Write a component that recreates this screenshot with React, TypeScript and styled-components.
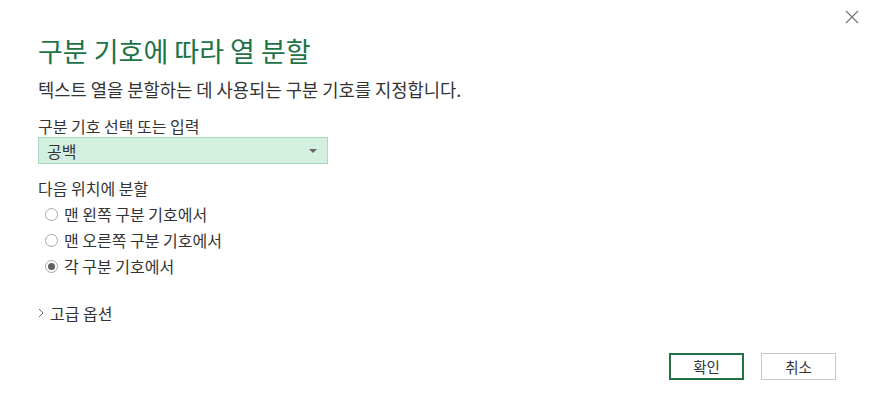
import React from "react";
import styled, { createGlobalStyle } from "styled-components";

const FONT = `"Noto Sans CJK KR", "Noto Sans", sans-serif`;

const GlobalStyle = createGlobalStyle`
  html, body {
    margin: 0;
    padding: 0;
    background: #ffffff;
  }
  body {
    font-family: ${FONT};
    color: #333333;
  }
`;

const OPTIONS = ["맨 왼쪽 구분 기호에서", "맨 오른쪽 구분 기호에서", "각 구분 기호에서"];

export default function App() {
  const [picked, setPicked] = React.useState(2);

  return (
    <>
      <GlobalStyle />
      <Dialog>
        <CloseButton aria-label="닫기">
          <svg width="14" height="14" viewBox="0 0 14 14">
            <path d="M1 1 L13 13 M13 1 L1 13" stroke="#777" strokeWidth="1.2" fill="none" />
          </svg>
        </CloseButton>
        <Title>구분 기호에 따라 열 분할</Title>
        <Subtitle>텍스트 열을 분할하는 데 사용되는 구분 기호를 지정합니다.</Subtitle>

        <FieldLabel>구분 기호 선택 또는 입력</FieldLabel>
        <Select>
          <span>공백</span>
          <Caret />
        </Select>

        <FieldLabel $top={14}>다음 위치에 분할</FieldLabel>
        <RadioList>
          {OPTIONS.map((label, i) => (
            <RadioRow key={label} onClick={() => setPicked(i)}>
              <RadioCircle $checked={picked === i} />
              {label}
            </RadioRow>
          ))}
        </RadioList>

        <Advanced>
          <svg width="6" height="10" viewBox="0 0 6 10">
            <path d="M1 1 L5 5 L1 9" stroke="#666" strokeWidth="1" fill="none" />
          </svg>
          고급 옵션
        </Advanced>

        <Footer>
          <Button $primary>확인</Button>
          <Button>취소</Button>
        </Footer>
      </Dialog>
    </>
  );
}

const Dialog = styled.div`
  position: relative;
  width: 874px;
  height: 418px;
  box-sizing: border-box;
  padding: 35px 38px 0 38px;
  display: flex;
  flex-direction: column;
  align-items: flex-start;
  overflow: hidden;
`;

const CloseButton = styled.button`
  position: absolute;
  top: 9px;
  right: 14px;
  width: 16px;
  height: 16px;
  padding: 0;
  border: none;
  background: transparent;
  display: flex;
  align-items: center;
  justify-content: center;
`;

const Title = styled.h1`
  margin: 0;
  font-size: 27px;
  line-height: 32px;
  font-weight: 400;
  color: #217346;
`;

const Subtitle = styled.p`
  margin: 10px 0 0 0;
  font-size: 17.7px;
  line-height: 24px;
  color: #333333;
`;

const FieldLabel = styled.div<{ $top?: number }>`
  margin-top: ${(p) => p.$top ?? 15}px;
  font-size: 16px;
  line-height: 20px;
  color: #333333;
`;

const Select = styled.div`
  margin-top: 1px;
  width: 290px;
  height: 27px;
  box-sizing: border-box;
  border: 1px solid #a6dcbd;
  background: #d3efdf;
  display: flex;
  align-items: center;
  justify-content: space-between;
  padding: 0 10px 0 8px;
  font-size: 16px;
  color: #333333;
`;

const Caret = styled.span`
  width: 0;
  height: 0;
  border-left: 4px solid transparent;
  border-right: 4px solid transparent;
  border-top: 4px solid #666666;
`;

const RadioList = styled.div`
  margin-top: 3px;
  display: flex;
  flex-direction: column;
`;

const RadioRow = styled.label`
  height: 26px;
  display: flex;
  align-items: center;
  gap: 6px;
  padding-left: 7px;
  font-size: 16px;
  color: #333333;
  cursor: pointer;
`;

const RadioCircle = styled.span<{ $checked: boolean }>`
  width: 13px;
  height: 13px;
  box-sizing: border-box;
  border-radius: 50%;
  border: 1px solid #a8a8a8;
  background: #ffffff;
  display: flex;
  align-items: center;
  justify-content: center;

  &::after {
    content: "";
    width: 7px;
    height: 7px;
    border-radius: 50%;
    background: ${(p) => (p.$checked ? "#606060" : "transparent")};
  }
`;

const Advanced = styled.div`
  margin-top: 24px;
  display: flex;
  align-items: center;
  gap: 6px;
  font-size: 16px;
  line-height: 20px;
  color: #333333;
`;

const Footer = styled.div`
  margin-top: 30px;
  align-self: stretch;
  display: flex;
  justify-content: flex-end;
  gap: 17px;
`;

const Button = styled.button<{ $primary?: boolean }>`
  width: 75px;
  height: 27px;
  box-sizing: border-box;
  background: #ffffff;
  border: ${(p) => (p.$primary ? "2px solid #217346" : "1px solid #c8c8c8")};
  font-family: ${FONT};
  font-size: 14.5px;
  color: #333333;
  padding: 0;
`;
